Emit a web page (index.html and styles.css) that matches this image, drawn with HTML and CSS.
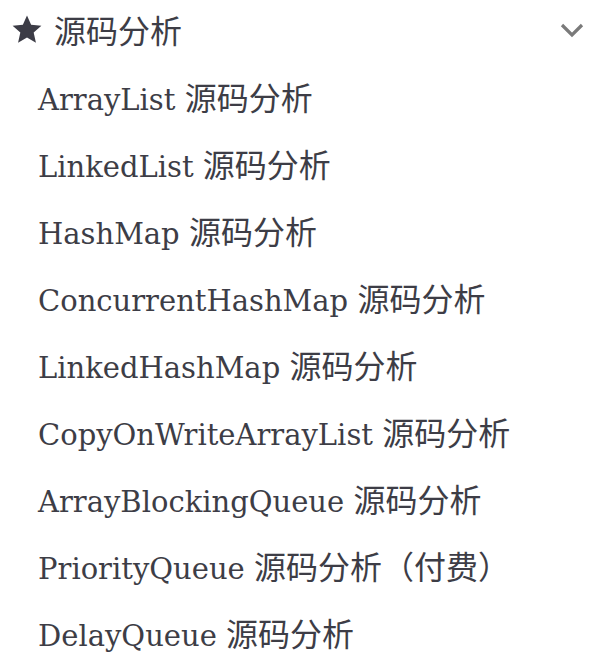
FILE: index.html
```html
<!DOCTYPE html>
<html>
<head>
<meta charset="utf-8">
<link rel="stylesheet" href="styles.css">
</head>
<body>
<div class="menu">
  <div class="header">
    <svg class="star" viewBox="0 0 24 24" width="32" height="32"><path d="M12 1.8l3.1 7.1 7.7.7-5.8 5.1 1.7 7.6L12 18.3l-6.7 4 1.7-7.6-5.8-5.1 7.7-.7z" fill="#3c3c46"/></svg>
    <span class="title">源码分析</span>
    <svg class="chev" viewBox="0 0 24 16" width="24" height="16"><path d="M2 3l10 10L22 3" fill="none" stroke="#7a7a7a" stroke-width="3.2"/></svg>
  </div>
  <ul class="items">
    <li>ArrayList <span class="zh">源码分析</span></li>
    <li>LinkedList <span class="zh">源码分析</span></li>
    <li>HashMap <span class="zh">源码分析</span></li>
    <li>ConcurrentHashMap <span class="zh">源码分析</span></li>
    <li>LinkedHashMap <span class="zh">源码分析</span></li>
    <li>CopyOnWriteArrayList <span class="zh">源码分析</span></li>
    <li>ArrayBlockingQueue <span class="zh">源码分析</span></li>
    <li>PriorityQueue <span class="zh">源码分析（付费）</span></li>
    <li>DelayQueue <span class="zh">源码分析</span></li>
  </ul>
</div>
</body>
</html>
```
FILE: styles.css
```css
html, body { margin: 0; padding: 0; background: #fff; }
.menu { width: 614px; color: #3d3d46; }
.header { display: flex; align-items: center; height: 58px; padding: 0 30px 0 11px; box-sizing: border-box; }
.star { flex: none; }
.title { margin-left: 11px; font-family: "Noto Sans CJK SC", sans-serif; font-size: 32px; flex: 1; }
.chev { flex: none; margin-top: 2px; }
.items { list-style: none; margin: 0; padding: 5px 0 0 38px; }
.items li { height: 67px; line-height: 67px; font-family: "DejaVu Serif", "Noto Sans CJK SC", serif; font-size: 29px; white-space: nowrap; }
.zh { font-family: "Noto Sans CJK SC", sans-serif; font-size: 32px; }
```
